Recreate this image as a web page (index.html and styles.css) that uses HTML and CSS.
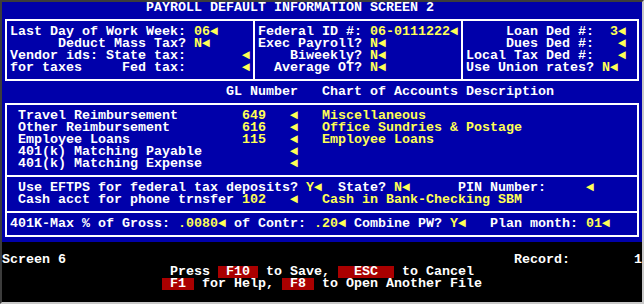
FILE: index.html
```html
<!DOCTYPE html>
<html lang="en">
<head>
    <meta charset="UTF-8">
    <meta name="viewport" content="width=device-width, initial-scale=1.0">
    <title>Payroll Default Information Screen 2</title>
    <link rel="stylesheet" href="styles.css">
</head>
<body>
    <div class="window">
        <div class="blue">
            <div class="title">PAYROLL DEFAULT INFORMATION SCREEN 2</div>

            <div class="box top-box">
                <div class="col">
                    <div class="ln">Last Day of Work Week: <span class="y">06</span><span class="arr">◄</span></div>
                    <div class="ln">      Deduct Mass Tax? <span class="y">N</span><span class="arr">◄</span></div>
                    <div class="ln">Vendor ids: State tax:       <span class="arr">◄</span></div>
                    <div class="ln">for taxes     Fed tax:       <span class="arr">◄</span></div>
                </div>
                <div class="col">
                    <div class="ln">Federal ID #: <span class="y">06-0111222</span><span class="arr">◄</span></div>
                    <div class="ln">Exec Payroll? <span class="y">N</span><span class="arr">◄</span></div>
                    <div class="ln">    Biweekly? <span class="y">N</span><span class="arr">◄</span></div>
                    <div class="ln">  Average OT? <span class="y">N</span><span class="arr">◄</span></div>
                </div>
                <div class="col">
                    <div class="ln">     Loan Ded #:  <span class="y">3</span><span class="arr">◄</span></div>
                    <div class="ln">     Dues Ded #:   <span class="arr">◄</span></div>
                    <div class="ln">Local Tax Ded #:   <span class="arr">◄</span></div>
                    <div class="ln">Use Union rates? <span class="y">N</span><span class="arr">◄</span></div>
                </div>
            </div>

            <div class="heading">GL Number   Chart of Accounts Description</div>

            <div class="box gl-box">
                <div class="sec">
                    <div class="acct"><span>Travel Reimbursement</span><span class="y">649</span><span class="arr">◄</span><span class="y">Miscellaneous</span></div>
                    <div class="acct"><span>Other Reimbursement</span><span class="y">616</span><span class="arr">◄</span><span class="y">Office Sundries &amp; Postage</span></div>
                    <div class="acct"><span>Employee Loans</span><span class="y">115</span><span class="arr">◄</span><span class="y">Employee Loans</span></div>
                    <div class="acct"><span>401(k) Matching Payable</span><span class="y"></span><span class="arr">◄</span><span class="y"></span></div>
                    <div class="acct"><span>401(k) Matching Expense</span><span class="y"></span><span class="arr">◄</span><span class="y"></span></div>
                </div>
                <div class="sec">
                    <div class="ln">Use EFTPS for federal tax deposits? <span class="y">Y</span><span class="arr">◄</span>  State? <span class="y">N</span><span class="arr">◄</span>      PIN Number:     <span class="arr">◄</span></div>
                    <div class="acct"><span>Cash acct for phone trnsfer</span><span class="y">102</span><span class="arr">◄</span><span class="y">Cash in Bank-Checking SBM</span></div>
                </div>
                <div class="sec sec-plan">
                    <div class="ln">401K-Max % of Gross: <span class="y">.0080</span><span class="arr">◄</span> of Contr: <span class="y">.20</span><span class="arr">◄</span> Combine PW? <span class="y">Y</span><span class="arr">◄</span>   Plan month: <span class="y">01</span><span class="arr">◄</span></div>
                </div>
            </div>
        </div>

        <div class="black">
            <div class="status"><span>Screen 6</span><span>Record:</span><span>1</span></div>
            <div class="keys keys-save">Press <span class="key"> F10 </span> to Save, <span class="key">  ESC  </span> to Cancel</div>
            <div class="keys keys-help"><span class="key"> F1 </span> for Help, <span class="key"> F8 </span> to Open Another File</div>
        </div>
    </div>
</body>
</html>
```

FILE: styles.css
```css
body {
    margin: 0;
    background-color: #000000;
    color: #FFFFFF;
    font-family: "Liberation Mono", "DejaVu Sans Mono", monospace;
    font-weight: bold;
    font-size: 13.3333px;
    line-height: 12px;
}
.window {
    width: 640px;
    height: 300px;
    border: 2px solid;
    border-color: #3C3C3C #C8C8C8 #C8C8C8 #3C3C3C;
    background-color: #000000;
}
.blue {
    height: 240px;
    background-color: #0000AA;
}
.title {
    height: 12px;
    padding-left: 144px;
    white-space: pre;
}
.ln {
    height: 12px;
    white-space: pre;
}
.y {
    color: #FFFF55;
}
.arr {
    display: inline-block;
    width: 8px;
    color: #FFFF55;
    vertical-align: top;
}
.box {
    box-sizing: border-box;
    width: 634px;
    margin: 5px 0 0 3px;
    border: 2px solid #FFFFFF;
}
.top-box {
    display: grid;
    grid-template-columns: 246px 208px 176px;
    height: 62px;
}
.top-box .col {
    padding: 5px 0 5px 3px;
}
.top-box .col + .col {
    border-left: 2px solid #FFFFFF;
}
.heading {
    height: 12px;
    margin-top: 5px;
    padding-left: 224px;
    white-space: pre;
}
.sec {
    padding: 5px 0 5px 11px;
}
.sec + .sec {
    border-top: 2px solid #FFFFFF;
}
.sec-plan {
    padding-left: 3px;
}
.acct {
    display: grid;
    grid-template-columns: 224px 48px 32px auto;
    height: 12px;
    white-space: pre;
}
.black {
    box-sizing: border-box;
    height: 60px;
    padding-top: 12px;
}
.status {
    display: grid;
    grid-template-columns: 512px 120px 8px;
    height: 12px;
}
.keys {
    height: 12px;
    white-space: pre;
}
.keys-save {
    padding-left: 168px;
}
.keys-help {
    padding-left: 160px;
}
.key {
    display: inline-block;
    height: 12px;
    vertical-align: top;
    background-color: #AA0000;
}
```
